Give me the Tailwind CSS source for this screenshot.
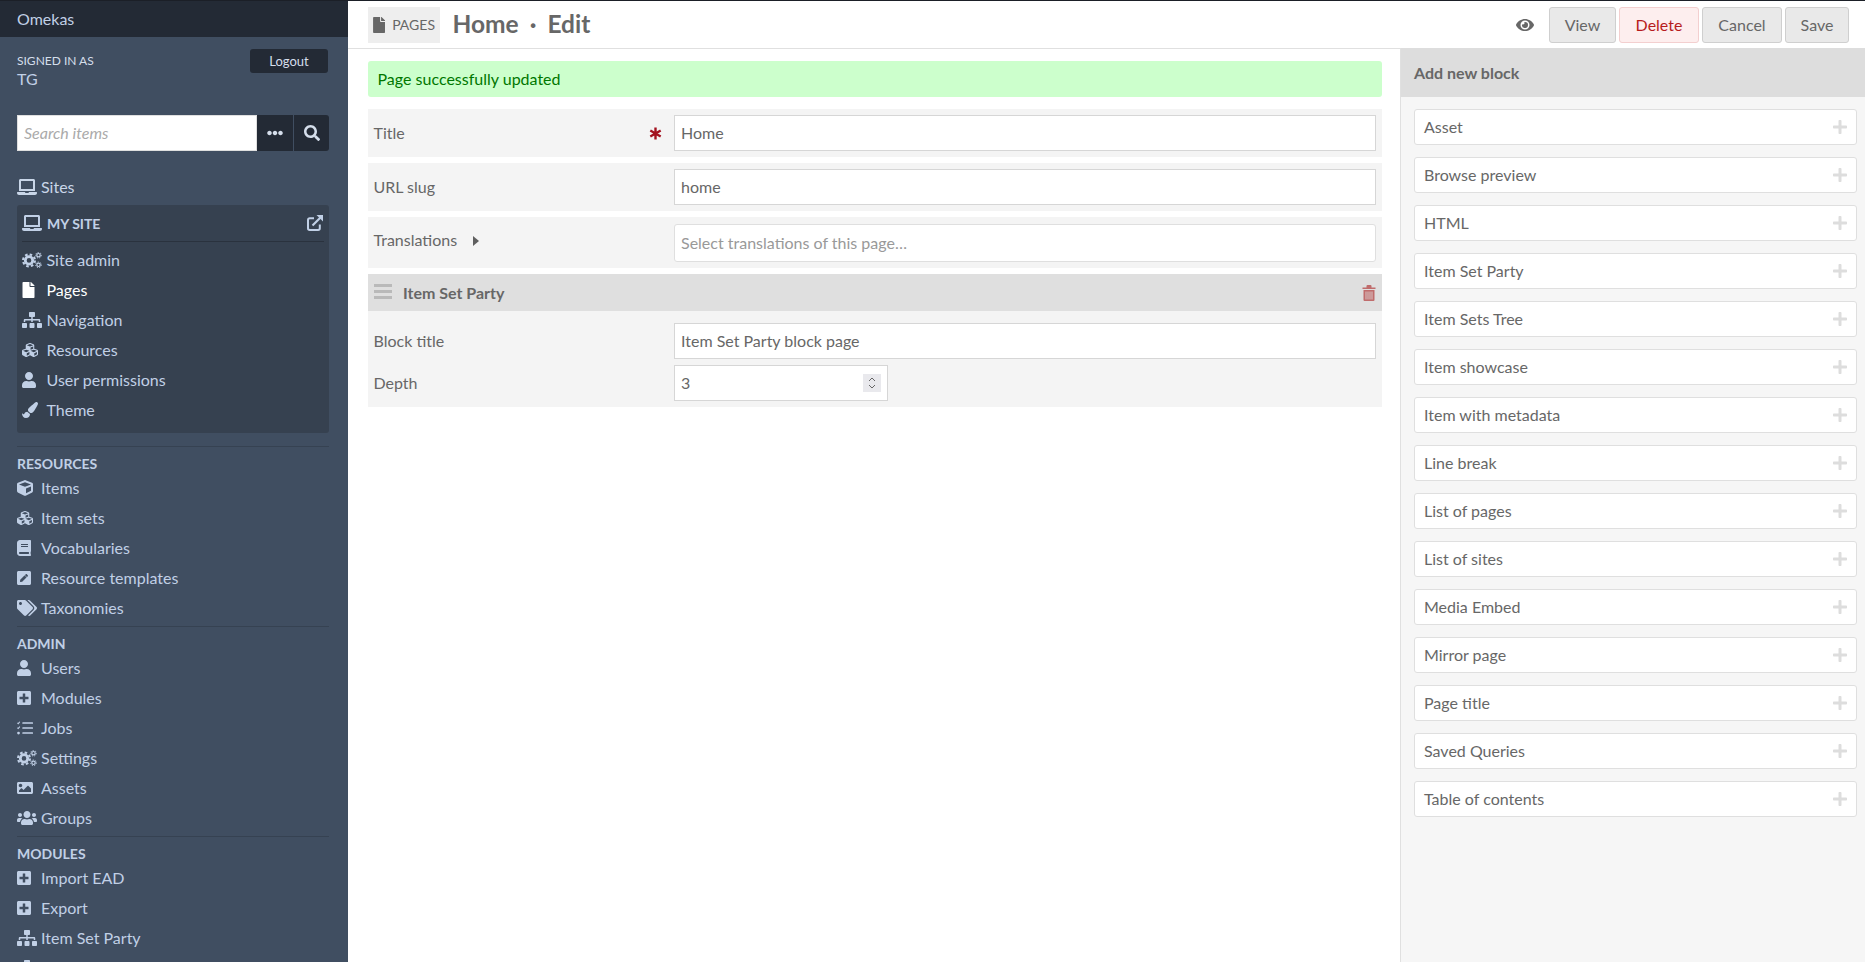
<!DOCTYPE html>
<html lang="en">
<head>
  <meta charset="UTF-8" />
  <title>Omekas · Edit page</title>
  <script src="https://cdn.jsdelivr.net/npm/@tailwindcss/browser@4"></script>
</head>
<body class="h-screen overflow-hidden flex font-['Lato','Open_Sans',sans-serif] text-[16px] text-[#676767] bg-white">

  <svg class="hidden">
    <symbol id="laptop" viewBox="0 0 640 512"><path fill="currentColor" d="M624 416H381.54c-.74 19.81-14.71 32-32.74 32H288c-18.69 0-33.02-17.47-32.77-32H16c-8.8 0-16 7.2-16 16v16c0 35.2 28.8 64 64 64h512c35.2 0 64-28.8 64-64v-16c0-8.8-7.2-16-16-16zM576 48c0-26.4-21.6-48-48-48H112C85.6 0 64 21.6 64 48v336h512V48zm-64 272H128V64h384v256z"/></symbol>
    <symbol id="file" viewBox="0 0 384 512"><path fill="currentColor" d="M224 136V0H24C10.7 0 0 10.7 0 24v464c0 13.3 10.7 24 24 24h336c13.3 0 24-10.7 24-24V160H248c-13.2 0-24-10.8-24-24zm160-14.1v6.1H256V0h6.1c6.4 0 12.5 2.5 17 7l97.9 98c4.5 4.5 7 10.6 7 16.9z"/></symbol>
    <symbol id="user" viewBox="0 0 448 512"><path fill="currentColor" d="M224 256c70.7 0 128-57.3 128-128S294.7 0 224 0 96 57.3 96 128s57.3 128 128 128zm89.6 32h-16.7c-22.2 10.2-46.9 16-72.9 16s-50.6-5.8-72.9-16h-16.7C60.2 288 0 348.2 0 422.4V464c0 26.5 21.5 48 48 48h352c26.5 0 48-21.5 48-48v-41.6c0-74.2-60.2-134.4-134.4-134.4z"/></symbol>
    <symbol id="search" viewBox="0 0 512 512"><path fill="currentColor" d="M505 442.7L405.3 343c-4.5-4.5-10.6-7-17-7H372c27.6-35.3 44-79.7 44-128C416 93.1 322.9 0 208 0S0 93.1 0 208s93.1 208 208 208c48.3 0 92.7-16.4 128-44v16.3c0 6.4 2.5 12.5 7 17l99.7 99.7c9.4 9.4 24.6 9.4 33.9 0l28.3-28.3c9.4-9.4 9.4-24.6.1-34zM208 336c-70.7 0-128-57.2-128-128 0-70.7 57.2-128 128-128 70.7 0 128 57.2 128 128 0 70.7-57.2 128-128 128z"/></symbol>
    <symbol id="dots" viewBox="0 0 512 512"><path fill="currentColor" d="M328 256c0 39.8-32.2 72-72 72s-72-32.2-72-72 32.2-72 72-72 72 32.2 72 72zm104-72c-39.8 0-72 32.2-72 72s32.2 72 72 72 72-32.2 72-72-32.2-72-72-72zm-352 0c-39.8 0-72 32.2-72 72s32.2 72 72 72 72-32.2 72-72-32.2-72-72-72z"/></symbol>
    <symbol id="plus-square" viewBox="0 0 448 512"><path fill="currentColor" d="M400 32H48C21.5 32 0 53.5 0 80v352c0 26.5 21.5 48 48 48h352c26.5 0 48-21.5 48-48V80c0-26.5-21.5-48-48-48zm-32 252c0 6.6-5.4 12-12 12h-92v92c0 6.6-5.4 12-12 12h-56c-6.6 0-12-5.4-12-12v-92H92c-6.6 0-12-5.4-12-12v-56c0-6.6 5.4-12 12-12h92v-92c0-6.6 5.4-12 12-12h56c6.6 0 12 5.4 12 12v92h92c6.6 0 12 5.4 12 12v56z"/></symbol>
    <symbol id="plus" viewBox="0 0 448 512"><path fill="currentColor" d="M416 208H272V64c0-17.67-14.33-32-32-32h-32c-17.67 0-32 14.33-32 32v144H32c-17.67 0-32 14.33-32 32v32c0 17.67 14.33 32 32 32h144v144c0 17.67 14.33 32 32 32h32c17.67 0 32-14.33 32-32V304h144c17.67 0 32-14.33 32-32v-32c0-17.67-14.33-32-32-32z"/></symbol>
    <symbol id="eye" viewBox="0 0 576 512"><path fill="currentColor" d="M572.52 241.4C518.29 135.59 410.93 64 288 64S57.68 135.64 3.48 241.41a32.35 32.35 0 0 0 0 29.19C57.71 376.41 165.07 448 288 448s230.32-71.64 284.52-177.41a32.35 32.35 0 0 0 0-29.19zM288 400a144 144 0 1 1 144-144 143.93 143.93 0 0 1-144 144zm0-240a95.31 95.31 0 0 0-25.31 3.79 47.85 47.85 0 0 1-66.9 66.9A95.78 95.78 0 1 0 288 160z"/></symbol>
    <symbol id="sitemap" viewBox="0 0 640 512"><path fill="currentColor" d="M128 352H32c-17.67 0-32 14.33-32 32v96c0 17.67 14.33 32 32 32h96c17.67 0 32-14.33 32-32v-96c0-17.67-14.33-32-32-32zm-24-80h192v48h48v-48h192v48h48v-57.59c0-21.17-17.23-38.41-38.41-38.41H344v-64h40c17.67 0 32-14.33 32-32V32c0-17.67-14.33-32-32-32H256c-17.67 0-32 14.33-32 32v96c0 17.67 14.33 32 32 32h40v64H94.41C73.23 224 56 241.23 56 262.41V320h48v-48zm264 80h-96c-17.67 0-32 14.33-32 32v96c0 17.67 14.33 32 32 32h96c17.67 0 32-14.33 32-32v-96c0-17.67-14.33-32-32-32zm240 0h-96c-17.67 0-32 14.33-32 32v96c0 17.67 14.33 32 32 32h96c17.67 0 32-14.33 32-32v-96c0-17.67-14.33-32-32-32z"/></symbol>
    <symbol id="cube" viewBox="0 0 512 512"><path fill="currentColor" d="M239.1 6.3l-208 78c-18.7 7-31.1 25-31.1 45v225.1c0 18.2 10.3 34.8 26.5 42.9l208 104c13.5 6.8 29.4 6.8 42.9 0l208-104c16.3-8.1 26.5-24.8 26.5-42.9V129.3c0-20-12.4-37.9-31.1-44.9l-208-78C262 2.2 250 2.2 239.1 6.3zM256 68.4l192 72v1.1l-192 78-192-78v-1.1l192-72zm32 356V275.5l160-65v133.9l-160 80z"/></symbol>
    <symbol id="cubes" viewBox="0 0 512 512"><path fill="currentColor" d="M488.6 250.2L392 214V105.5c0-15-9.3-28.4-23.4-33.7l-100-37.5c-8.1-3.1-17.1-3.1-25.3 0l-100 37.5c-14.1 5.3-23.4 18.7-23.4 33.7V214l-96.6 36.2C9.3 255.5 0 268.9 0 283.9V394c0 13.6 7.7 26.1 19.9 32.2l100 50c10.1 5.1 22.1 5.1 32.2 0l103.9-52 103.9 52c10.1 5.1 22.1 5.1 32.2 0l100-50c12.2-6.1 19.9-18.6 19.9-32.2V283.9c0-15-9.3-28.4-23.4-33.7zM358 214.8l-85 31.9v-68.2l85-37v73.3zM154 104.1l102-38.2 102 38.2v.6l-102 41.4-102-41.4v-.6zm84 291.1l-85 42.5v-79.1l85-38.8v75.4zm0-112l-102 41.4-102-41.4v-.6l102-38.2 102 38.2v.6zm240 112l-85 42.5v-79.1l85-38.8v75.4zm0-112l-102 41.4-102-41.4v-.6l102-38.2 102 38.2v.6z"/></symbol>
    <symbol id="brush" viewBox="0 0 512 512"><path fill="currentColor" d="M167.02 309.34c-40.12 2.58-76.53 17.86-97.19 72.3-2.35 6.21-8 9.98-14.59 9.98-11.11 0-45.46-27.67-55.25-34.35C0 439.62 37.93 512 128 512c75.86 0 128-43.77 128-120.19 0-3.11-.65-6.08-.97-9.13l-88.01-73.34zM457.89 0c-15.16 0-29.37 6.71-40.21 16.45C213.27 199.05 192 203.34 192 257.09c0 13.7 3.25 26.76 8.73 38.7l63.82 53.18c7.21 1.8 14.64 3.03 22.39 3.03 62.11 0 98.11-45.47 211.16-256.46 7.38-14.35 13.9-29.85 13.9-45.99C512 20.64 486 0 457.89 0z"/></symbol>
    <symbol id="book" viewBox="0 0 448 512"><path fill="currentColor" d="M448 360V24c0-13.3-10.7-24-24-24H96C43 0 0 43 0 96v320c0 53 43 96 96 96h328c13.3 0 24-10.7 24-24v-16c0-7.5-3.5-14.3-8.9-18.7-4.2-15.4-4.2-59.3 0-74.7 5.4-4.3 8.9-11.1 8.9-18.6zM128 134c0-3.3 2.7-6 6-6h212c3.3 0 6 2.7 6 6v20c0 3.3-2.7 6-6 6H134c-3.3 0-6-2.7-6-6v-20zm0 64c0-3.3 2.7-6 6-6h212c3.3 0 6 2.7 6 6v20c0 3.3-2.7 6-6 6H134c-3.3 0-6-2.7-6-6v-20zm253.4 250H96c-17.7 0-32-14.3-32-32 0-17.6 14.4-32 32-32h285.4c-1.9 17.1-1.9 46.9 0 64z"/></symbol>
    <symbol id="pen-square" viewBox="0 0 448 512"><path fill="currentColor" d="M400 480H48c-26.5 0-48-21.5-48-48V80c0-26.5 21.5-48 48-48h352c26.5 0 48 21.5 48 48v352c0 26.5-21.5 48-48 48zM238.1 177.9L102.4 313.6l-6.3 57.1c-.8 7.6 5.6 14.1 13.3 13.3l57.1-6.3L302.2 242c2.3-2.3 2.3-6.1 0-8.5L246.7 178c-2.5-2.4-6.3-2.4-8.6-.1zM345 165.1L314.9 135c-9.4-9.4-24.6-9.4-33.9 0l-23.1 23.1c-2.3 2.3-2.3 6.1 0 8.5l55.5 55.5c2.3 2.3 6.1 2.3 8.5 0L345 199c9.3-9.3 9.3-24.5 0-33.9z"/></symbol>
    <symbol id="tags" viewBox="0 0 640 512"><path fill="currentColor" d="M497.941 225.941L286.059 14.059A48 48 0 0 0 252.118 0H48C21.49 0 0 21.49 0 48v204.118a48 48 0 0 0 14.059 33.941l211.882 211.882c18.744 18.745 49.136 18.746 67.882 0l204.118-204.118c18.745-18.745 18.745-49.137 0-67.882zM112 160c-26.51 0-48-21.49-48-48s21.49-48 48-48 48 21.49 48 48-21.49 48-48 48zm513.941 133.823L421.823 497.941c-18.745 18.745-49.137 18.745-67.882 0l-.36-.36L527.64 323.522c16.999-16.999 26.36-39.6 26.36-63.64s-9.362-46.641-26.36-63.64L331.397 0h48.721a48 48 0 0 1 33.941 14.059l211.882 211.882c18.745 18.745 18.745 49.137 0 67.882z"/></symbol>
    <symbol id="image" viewBox="0 0 512 512"><path fill="currentColor" d="M464 448H48c-26.51 0-48-21.49-48-48V112c0-26.51 21.49-48 48-48h416c26.51 0 48 21.49 48 48v288c0 26.51-21.49 48-48 48zM112 120c-30.928 0-56 25.072-56 56s25.072 56 56 56 56-25.072 56-56-25.072-56-56-56zM64 384h384V272l-87.515-87.515c-4.686-4.686-12.284-4.686-16.971 0L208 320l-55.515-55.515c-4.686-4.686-12.284-4.686-16.971 0L64 336v48z"/></symbol>
    <symbol id="users" viewBox="0 0 640 512"><path fill="currentColor" d="M96 224c35.3 0 64-28.7 64-64s-28.7-64-64-64-64 28.7-64 64 28.7 64 64 64zm448 0c35.3 0 64-28.7 64-64s-28.7-64-64-64-64 28.7-64 64 28.7 64 64 64zm32 32h-64c-17.6 0-33.5 7.1-45.1 18.6 40.3 22.1 68.9 62 75.1 109.4h66c17.7 0 32-14.3 32-32v-32c0-35.3-28.7-64-64-64zm-256 0c61.9 0 112-50.1 112-112S381.9 32 320 32 208 82.1 208 144s50.1 112 112 112zm76.8 32h-8.3c-20.8 10-43.9 16-68.5 16s-47.6-6-68.5-16h-8.3C179.6 288 128 339.6 128 403.2V432c0 26.5 21.5 48 48 48h288c26.5 0 48-21.5 48-48v-28.8c0-63.6-51.6-115.2-115.2-115.2zm-223.7-13.4C161.5 263.1 145.6 256 128 256H64c-35.3 0-64 28.7-64 64v32c0 17.7 14.3 32 32 32h65.9c6.3-47.4 34.9-87.3 75.2-109.4z"/></symbol>
    <symbol id="tasks" viewBox="0 0 512 512">
      <path fill="none" stroke="currentColor" stroke-width="34" d="M14 92l26 26 50-62M14 248l26 26 50-62"/>
      <circle cx="48" cy="416" r="44" fill="currentColor"/>
      <rect x="170" y="72" width="342" height="50" rx="12" fill="currentColor"/>
      <rect x="170" y="232" width="342" height="50" rx="12" fill="currentColor"/>
      <rect x="170" y="392" width="342" height="50" rx="12" fill="currentColor"/>
    </symbol>
    <symbol id="cogs" viewBox="0 0 20 16">
      <circle cx="7" cy="8.4" r="3.7" fill="none" stroke="currentColor" stroke-width="2.8"/>
      <circle cx="7" cy="8.4" r="6" fill="none" stroke="currentColor" stroke-width="2" stroke-dasharray="2.6 2.1"/>
      <circle cx="16.5" cy="3.2" r="1.7" fill="none" stroke="currentColor" stroke-width="1.2"/>
      <circle cx="16.5" cy="3.2" r="2.8" fill="none" stroke="currentColor" stroke-width="1" stroke-dasharray="1.2 1.2"/>
      <circle cx="16.5" cy="12.8" r="1.7" fill="none" stroke="currentColor" stroke-width="1.2"/>
      <circle cx="16.5" cy="12.8" r="2.8" fill="none" stroke="currentColor" stroke-width="1" stroke-dasharray="1.2 1.2"/>
    </symbol>
    <symbol id="external" viewBox="0 0 16 16">
      <path fill="none" stroke="currentColor" stroke-width="2" d="M12.800 9.500v3.800a1.700 1.700 0 0 1-1.700 1.700H2.700A1.700 1.700 0 0 1 1 13.300V5a1.700 1.700 0 0 1 1.700-1.700H7"/>
      <path fill="none" stroke="currentColor" stroke-width="2.200" d="M5.500 10.500L14 2"/>
      <path fill="currentColor" d="M9.500 0H16V6.500z"/>
    </symbol>
    <symbol id="trash" viewBox="0 0 14 16">
      <path fill="currentColor" d="M0.500 2.500H4.500V1a1 1 0 0 1 1-1H8.500a1 1 0 0 1 1 1v1.500H13.500V4H0.500zM1.500 5H12.500V15a1 1 0 0 1-1 1H2.500a1 1 0 0 1-1-1z"/>
      <path fill="none" stroke="#dfdfdf" stroke-width="0.8" d="M4 6.500V14.500M6 6.500V14.500M8 6.500V14.500M10 6.500V14.500"/>
    </symbol>
  </svg>

  <!-- Sidebar -->
  <aside class="w-[348px] h-full shrink-0 bg-[#404e61] text-[#c1d0e6] overflow-hidden">
    <div class="h-[37px] bg-[#232a35] border-t border-[#1b1f27] flex items-center px-[17px]">Omekas</div>

    <div class="flex justify-between pl-[17px] pr-[20px] pt-[12px] h-[78px] text-[#d5deeb]">
      <div>
        <div class="text-[12px] leading-[16px] uppercase mt-[4px]">Signed in as</div>
        <div class="leading-[19px] text-[#c1d0e6]">TG</div>
      </div>
      <button class="w-[78px] h-[24px] pt-[1px] rounded-[3px] bg-[#232a35] text-[13px] text-[#d5deeb]">Logout</button>
    </div>

    <form class="flex h-[36px] mx-[17px] w-[312px]">
      <input class="w-[240px] h-full bg-white border border-[#dfdfdf] px-[6px] pb-[2px] italic outline-none placeholder:text-[#aaaaaa]" placeholder="Search items" />
      <button type="button" class="w-[37px] h-full bg-[#232a35] text-[#d5deeb] flex items-center justify-center border-r border-[#404e61]"><svg class="w-4 h-4"><use href="#dots"/></svg></button>
      <button type="button" class="w-[35px] h-full bg-[#232a35] text-[#d5deeb] rounded-r-[3px] flex items-center justify-center"><svg class="w-4 h-4"><use href="#search"/></svg></button>
    </form>

    <div class="flex items-center h-[30px] mt-[21px] px-[17px] text-[#c9d6e8]"><svg class="w-5 h-4 mr-1"><use href="#laptop"/></svg>Sites</div>

    <div class="mt-[3px] mx-[17px] w-[312px] h-[228px] bg-[#364150] rounded-[3px] px-[5px]">
      <div class="flex items-center justify-between h-[37px] border-b border-[#2a323e] font-bold text-[14px] uppercase">
        <span class="flex items-center"><svg class="w-5 h-4 mr-[5px] shrink-0"><use href="#laptop"/></svg>My Site</span>
        <svg class="w-4 h-4 mr-[1px]"><use href="#external"/></svg>
      </div>
      <div class="mt-[3px]">
        <a class="flex items-center h-[30px]"><span class="w-[24.500px]"><svg class="w-5 h-4 block"><use href="#cogs"/></svg></span>Site admin</a>
        <a class="flex items-center h-[30px] text-white"><span class="w-[24.500px]"><svg class="w-[13px] h-4 block"><use href="#file"/></svg></span>Pages</a>
        <a class="flex items-center h-[30px]"><span class="w-[24.500px]"><svg class="w-5 h-4 block"><use href="#sitemap"/></svg></span>Navigation</a>
        <a class="flex items-center h-[30px]"><span class="w-[24.500px]"><svg class="w-4 h-4 block"><use href="#cubes"/></svg></span>Resources</a>
        <a class="flex items-center h-[30px]"><span class="w-[24.500px]"><svg class="w-[14px] h-4 block"><use href="#user"/></svg></span>User permissions</a>
        <a class="flex items-center h-[30px]"><span class="w-[24.500px]"><svg class="w-4 h-4 block"><use href="#brush"/></svg></span>Theme</a>
      </div>
    </div>

    <div class="mx-[17px] w-[312px] mt-[13px] border-t border-[#364252]">
      <div class="h-[26px] pt-[6px] flex items-center font-bold text-[14px] uppercase">Resources</div>
      <a class="flex items-center h-[30px]"><span class="w-[24px]"><svg class="w-4 h-4 block"><use href="#cube"/></svg></span>Items</a>
      <a class="flex items-center h-[30px]"><span class="w-[24px]"><svg class="w-4 h-4 block"><use href="#cubes"/></svg></span>Item sets</a>
      <a class="flex items-center h-[30px]"><span class="w-[24px]"><svg class="w-[14px] h-4 block"><use href="#book"/></svg></span>Vocabularies</a>
      <a class="flex items-center h-[30px]"><span class="w-[24px]"><svg class="w-[14px] h-4 block"><use href="#pen-square"/></svg></span>Resource templates</a>
      <a class="flex items-center h-[30px]"><span class="w-[24px]"><svg class="w-5 h-4 block"><use href="#tags"/></svg></span>Taxonomies</a>
    </div>

    <div class="mx-[17px] w-[312px] mt-[3px] border-t border-[#364252]">
      <div class="h-[26px] pt-[6px] flex items-center font-bold text-[14px] uppercase">Admin</div>
      <a class="flex items-center h-[30px]"><span class="w-[24px]"><svg class="w-[14px] h-4 block"><use href="#user"/></svg></span>Users</a>
      <a class="flex items-center h-[30px]"><span class="w-[24px]"><svg class="w-[14px] h-4 block"><use href="#plus-square"/></svg></span>Modules</a>
      <a class="flex items-center h-[30px]"><span class="w-[24px]"><svg class="w-4 h-4 block"><use href="#tasks"/></svg></span>Jobs</a>
      <a class="flex items-center h-[30px]"><span class="w-[24px]"><svg class="w-5 h-4 block"><use href="#cogs"/></svg></span>Settings</a>
      <a class="flex items-center h-[30px]"><span class="w-[24px]"><svg class="w-4 h-4 block"><use href="#image"/></svg></span>Assets</a>
      <a class="flex items-center h-[30px]"><span class="w-[24px]"><svg class="w-5 h-4 block"><use href="#users"/></svg></span>Groups</a>
    </div>

    <div class="mx-[17px] w-[312px] mt-[3px] border-t border-[#364252]">
      <div class="h-[26px] pt-[6px] flex items-center font-bold text-[14px] uppercase">Modules</div>
      <a class="flex items-center h-[30px]"><span class="w-[24px]"><svg class="w-[14px] h-4 block"><use href="#plus-square"/></svg></span>Import EAD</a>
      <a class="flex items-center h-[30px]"><span class="w-[24px]"><svg class="w-[14px] h-4 block"><use href="#plus-square"/></svg></span>Export</a>
      <a class="flex items-center h-[30px]"><span class="w-[24px]"><svg class="w-5 h-4 block"><use href="#sitemap"/></svg></span>Item Set Party</a>
      <a class="flex items-center h-[30px]"><span class="w-[24px]"><svg class="w-5 h-4 block"><use href="#sitemap"/></svg></span></a>
    </div>
  </aside>

  <!-- Main -->
  <div class="flex-1 min-w-0 flex flex-col">
    <header class="h-[49px] shrink-0 border-t border-[#1b1f27] border-b border-b-[#e0e0e0] flex items-center pl-[20px] pr-[16px]">
      <div class="h-[36px] w-[72px] bg-[#eeeeee] flex items-center px-[5px] text-[14px]"><svg class="w-[13px] h-4 mr-[7px]"><use href="#file"/></svg>PAGES</div>
      <h1 class="ml-[12.500px] text-[24.500px] font-bold flex items-center">Home<span class="mx-[11px]">·</span>Edit</h1>
      <div class="ml-auto flex items-center gap-[3px]">
        <svg class="w-[18px] h-4 mr-[12px]"><use href="#eye"/></svg>
        <button class="h-[36px] w-[67px] pt-[1px] rounded-[3px] border border-[#cfcfcf] bg-[#e9e9e9]">View</button>
        <button class="h-[36px] w-[80px] pt-[1px] rounded-[3px] border border-[#f3cfcf] bg-[#fdeeee] text-[#b71c1c]">Delete</button>
        <button class="h-[36px] w-[80px] pt-[1px] rounded-[3px] border border-[#cfcfcf] bg-[#e9e9e9]">Cancel</button>
        <button class="h-[36px] w-[64px] pt-[1px] rounded-[3px] border border-[#cfcfcf] bg-[#e9e9e9]">Save</button>
      </div>
    </header>

    <div class="flex-1 min-h-0 flex">
      <main class="w-[1052px] pl-[20px] pr-[18px] pt-[12px]">
        <div class="h-[36px] rounded-[3px] bg-[#ccffcc] text-[#007700] flex items-center px-[9.500px]">Page successfully updated</div>

        <div class="mt-[12px] h-[48px] bg-[#f4f4f4] flex items-center pl-[5.500px] pr-[6px]">
          <label class="w-[275.500px] shrink-0">Title</label>
          <svg class="w-[13px] h-[13px] text-[#a3121f] shrink-0" viewBox="0 0 12 12"><path fill="none" stroke="currentColor" stroke-width="2.200" d="M6 0.500V11.500M1.200 3.200L10.800 8.800M10.800 3.200L1.200 8.800"/></svg>
          <input class="ml-[12px] flex-1 h-[36px] border border-[#d6d6d6] bg-white px-[6px] pb-[2px] outline-none" value="Home" />
        </div>
        <div class="mt-[6px] h-[48px] bg-[#f4f4f4] flex items-center pl-[5.500px] pr-[6px]">
          <label class="w-[300.500px] shrink-0">URL slug</label>
          <input class="flex-1 h-[36px] border border-[#d6d6d6] bg-white px-[6px] pb-[2px] outline-none" value="home" />
        </div>
        <div class="mt-[6px] h-[51px] bg-[#f4f4f4] flex pl-[5.500px] pr-[6px] pt-[7px]">
          <label class="w-[300.500px] shrink-0 flex items-start leading-[32px]">Translations<span class="ml-[16px] mt-[12px] w-0 h-0 border-y-[5px] border-y-transparent border-l-[6px] border-l-[#5f5f5f]"></span></label>
          <div class="flex-1 h-[38px] rounded-[3px] border border-[#dfdfdf] bg-white px-[6px] flex items-center text-[#999999]">Select translations of this page…</div>
        </div>

        <div class="mt-[6px] h-[37px] bg-[#dfdfdf] flex items-center pl-[5.500px] pr-[6px]">
          <span class="w-[18px] flex flex-col gap-[3px] ml-[0.500px] mr-[11px] -mt-[2px]">
            <i class="block h-[3px] bg-[#b9b9b9]"></i><i class="block h-[3px] bg-[#b9b9b9]"></i><i class="block h-[3px] bg-[#b9b9b9]"></i>
          </span>
          <span class="font-bold">Item Set Party</span>
          <svg class="ml-auto w-[14px] h-4 text-[#c06c6c]"><use href="#trash"/></svg>
        </div>
        <div class="h-[96px] bg-[#f4f4f4] pl-[5.500px] pr-[6px] pt-[12px]">
          <div class="flex items-center h-[36px]">
            <label class="w-[300.500px] shrink-0">Block title</label>
            <input class="flex-1 h-[36px] border border-[#d6d6d6] bg-white px-[6px] pb-[2px] outline-none" value="Item Set Party block page" />
          </div>
          <div class="flex items-center h-[36px] mt-[6px]">
            <label class="w-[300.500px] shrink-0">Depth</label>
            <div class="w-[214px] h-[36px] border border-[#d6d6d6] bg-white pl-[6px] pr-[6px] flex items-center justify-between">
              <span>3</span>
              <span class="w-[18px] h-[18px] bg-[#e9e9ed] flex items-center justify-center">
                <svg class="w-[10px] h-[14px]" viewBox="0 0 10 14"><path fill="none" stroke="#666" stroke-width="1" d="M2 5l3-3 3 3M2 9l3 3 3-3"/></svg>
              </span>
            </div>
          </div>
        </div>
      </main>

      <aside class="flex-1 -mt-[1px] border-l border-[#e0e0e0] bg-[#f6f6f6]">
        <h2 class="h-[49px] bg-[#dddddd] flex items-center px-[13px] font-bold">Add new block</h2>
        <ul class="pl-[13px] pr-[8px] pt-[12px] flex flex-col gap-[12px]">
          <li class="h-[36px] rounded-[3px] border border-[#dfdfdf] bg-white flex items-center justify-between pl-[9px] pr-[9px]">Asset<svg class="w-[14px] h-4 text-[#dddddd]"><use href="#plus"/></svg></li>
          <li class="h-[36px] rounded-[3px] border border-[#dfdfdf] bg-white flex items-center justify-between pl-[9px] pr-[9px]">Browse preview<svg class="w-[14px] h-4 text-[#dddddd]"><use href="#plus"/></svg></li>
          <li class="h-[36px] rounded-[3px] border border-[#dfdfdf] bg-white flex items-center justify-between pl-[9px] pr-[9px]">HTML<svg class="w-[14px] h-4 text-[#dddddd]"><use href="#plus"/></svg></li>
          <li class="h-[36px] rounded-[3px] border border-[#dfdfdf] bg-white flex items-center justify-between pl-[9px] pr-[9px]">Item Set Party<svg class="w-[14px] h-4 text-[#dddddd]"><use href="#plus"/></svg></li>
          <li class="h-[36px] rounded-[3px] border border-[#dfdfdf] bg-white flex items-center justify-between pl-[9px] pr-[9px]">Item Sets Tree<svg class="w-[14px] h-4 text-[#dddddd]"><use href="#plus"/></svg></li>
          <li class="h-[36px] rounded-[3px] border border-[#dfdfdf] bg-white flex items-center justify-between pl-[9px] pr-[9px]">Item showcase<svg class="w-[14px] h-4 text-[#dddddd]"><use href="#plus"/></svg></li>
          <li class="h-[36px] rounded-[3px] border border-[#dfdfdf] bg-white flex items-center justify-between pl-[9px] pr-[9px]">Item with metadata<svg class="w-[14px] h-4 text-[#dddddd]"><use href="#plus"/></svg></li>
          <li class="h-[36px] rounded-[3px] border border-[#dfdfdf] bg-white flex items-center justify-between pl-[9px] pr-[9px]">Line break<svg class="w-[14px] h-4 text-[#dddddd]"><use href="#plus"/></svg></li>
          <li class="h-[36px] rounded-[3px] border border-[#dfdfdf] bg-white flex items-center justify-between pl-[9px] pr-[9px]">List of pages<svg class="w-[14px] h-4 text-[#dddddd]"><use href="#plus"/></svg></li>
          <li class="h-[36px] rounded-[3px] border border-[#dfdfdf] bg-white flex items-center justify-between pl-[9px] pr-[9px]">List of sites<svg class="w-[14px] h-4 text-[#dddddd]"><use href="#plus"/></svg></li>
          <li class="h-[36px] rounded-[3px] border border-[#dfdfdf] bg-white flex items-center justify-between pl-[9px] pr-[9px]">Media Embed<svg class="w-[14px] h-4 text-[#dddddd]"><use href="#plus"/></svg></li>
          <li class="h-[36px] rounded-[3px] border border-[#dfdfdf] bg-white flex items-center justify-between pl-[9px] pr-[9px]">Mirror page<svg class="w-[14px] h-4 text-[#dddddd]"><use href="#plus"/></svg></li>
          <li class="h-[36px] rounded-[3px] border border-[#dfdfdf] bg-white flex items-center justify-between pl-[9px] pr-[9px]">Page title<svg class="w-[14px] h-4 text-[#dddddd]"><use href="#plus"/></svg></li>
          <li class="h-[36px] rounded-[3px] border border-[#dfdfdf] bg-white flex items-center justify-between pl-[9px] pr-[9px]">Saved Queries<svg class="w-[14px] h-4 text-[#dddddd]"><use href="#plus"/></svg></li>
          <li class="h-[36px] rounded-[3px] border border-[#dfdfdf] bg-white flex items-center justify-between pl-[9px] pr-[9px]">Table of contents<svg class="w-[14px] h-4 text-[#dddddd]"><use href="#plus"/></svg></li>
        </ul>
      </aside>
    </div>
  </div>

</body>
</html>
